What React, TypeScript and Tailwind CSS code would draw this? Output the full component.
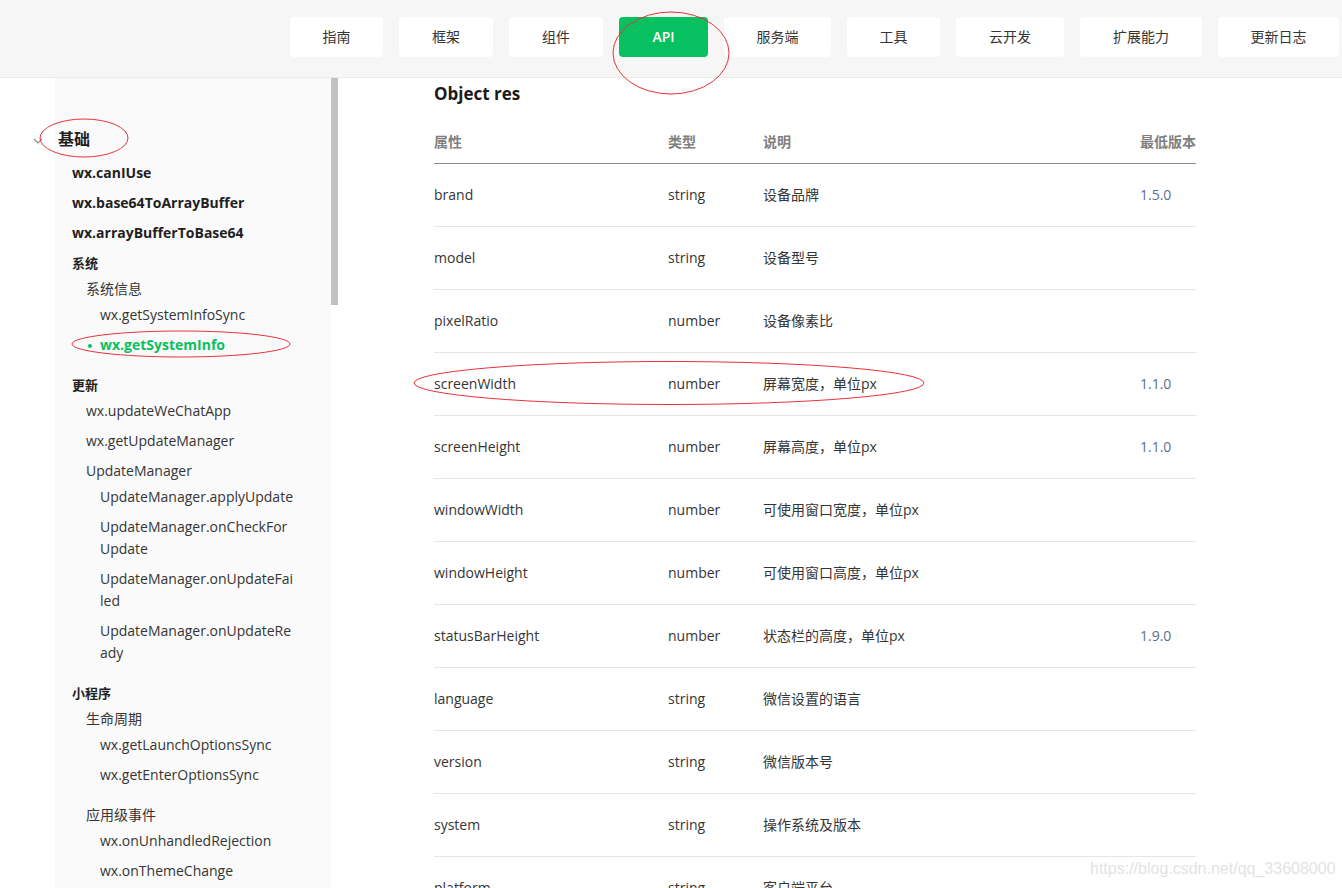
import React from "react";

const navItems = [
  { label: "指南", w: "w-[93px]" },
  { label: "框架", w: "w-[94px]" },
  { label: "组件", w: "w-[94px]" },
  { label: "API", w: "w-[89px]", active: true },
  { label: "服务端", w: "w-[107px]" },
  { label: "工具", w: "w-[93px]" },
  { label: "云开发", w: "w-[108px]" },
  { label: "扩展能力", w: "w-[122px]" },
  { label: "更新日志", w: "w-[121px]" },
];

type SideItem = {
  text: string[];
  kind: "bold" | "group" | "sub" | "item" | "active";
  indent: number;
  gapAfter?: boolean;
};

const sideItems: SideItem[] = [
  { text: ["wx.canIUse"], kind: "bold", indent: 17 },
  { text: ["wx.base64ToArrayBuffer"], kind: "bold", indent: 17 },
  { text: ["wx.arrayBufferToBase64"], kind: "bold", indent: 17 },
  { text: ["系统"], kind: "group", indent: 17 },
  { text: ["系统信息"], kind: "sub", indent: 31 },
  { text: ["wx.getSystemInfoSync"], kind: "item", indent: 45 },
  { text: ["wx.getSystemInfo"], kind: "active", indent: 45, gapAfter: true },
  { text: ["更新"], kind: "group", indent: 17 },
  { text: ["wx.updateWeChatApp"], kind: "item", indent: 31 },
  { text: ["wx.getUpdateManager"], kind: "item", indent: 31 },
  { text: ["UpdateManager"], kind: "sub", indent: 31 },
  { text: ["UpdateManager.applyUpdate"], kind: "item", indent: 45 },
  { text: ["UpdateManager.onCheckFor", "Update"], kind: "item", indent: 45 },
  { text: ["UpdateManager.onUpdateFai", "led"], kind: "item", indent: 45 },
  { text: ["UpdateManager.onUpdateRe", "ady"], kind: "item", indent: 45, gapAfter: true },
  { text: ["小程序"], kind: "group", indent: 17 },
  { text: ["生命周期"], kind: "sub", indent: 31 },
  { text: ["wx.getLaunchOptionsSync"], kind: "item", indent: 45 },
  { text: ["wx.getEnterOptionsSync"], kind: "item", indent: 45, gapAfter: true },
  { text: ["应用级事件"], kind: "sub", indent: 31 },
  { text: ["wx.onUnhandledRejection"], kind: "item", indent: 45 },
  { text: ["wx.onThemeChange"], kind: "item", indent: 45 },
];

const rows = [
  ["brand", "string", "设备品牌", "1.5.0"],
  ["model", "string", "设备型号", ""],
  ["pixelRatio", "number", "设备像素比", ""],
  ["screenWidth", "number", "屏幕宽度，单位px", "1.1.0"],
  ["screenHeight", "number", "屏幕高度，单位px", "1.1.0"],
  ["windowWidth", "number", "可使用窗口宽度，单位px", ""],
  ["windowHeight", "number", "可使用窗口高度，单位px", ""],
  ["statusBarHeight", "number", "状态栏的高度，单位px", "1.9.0"],
  ["language", "string", "微信设置的语言", ""],
  ["version", "string", "微信版本号", ""],
  ["system", "string", "操作系统及版本", ""],
  ["platform", "string", "客户端平台", ""],
];

function SideRow({ item }: { item: SideItem }) {
  const isHeading = item.kind === "group" || item.kind === "sub";
  let textCls = "text-[14px] text-[#353535]";
  if (item.kind === "bold") textCls = "text-[14px] font-bold text-[#1f1f1f]";
  if (item.kind === "group") textCls = "text-[13px] font-semibold text-[#1f1f1f]";
  if (item.kind === "sub") textCls = "text-[14px] text-[#353535]";
  if (item.kind === "active") textCls = "text-[14px] font-bold text-[#07c160]";

  return (
    <div
      className={`relative leading-[22px] ${isHeading ? "pt-1" : "py-1"} ${
        item.gapAfter ? "mb-[10px]" : ""
      } ${textCls}`}
      style={{ paddingLeft: item.indent }}
    >
      {item.kind === "active" && (
        <span className="absolute left-[33px] top-[14px] h-[4px] w-[4px] rounded-full bg-[#07c160]" />
      )}
      {item.text.map((t) => (
        <div key={t}>{t}</div>
      ))}
    </div>
  );
}

export default function App() {
  return (
    <div className="relative h-[888px] w-[1342px] overflow-hidden bg-white font-['Open_Sans','Noto_Sans_CJK_SC',sans-serif] text-[#353535]">
      {/* top nav */}
      <header className="flex h-[78px] gap-4 border-b border-[#ebebeb] bg-[#f6f6f6] pl-[290px] pt-[17px]">
        {navItems.map((n) => (
          <div
            key={n.label}
            className={`flex h-10 shrink-0 items-center justify-center rounded-[4px] pb-[1px] text-[14px] ${n.w} ${
              n.active ? "bg-[#07c160] font-semibold text-white" : "bg-white text-[#353535]"
            }`}
          >
            {n.label}
          </div>
        ))}
      </header>

      <div className="flex">
        {/* sidebar */}
        <aside className="flex w-[331px] shrink-0">
          <div className="w-[55px] shrink-0" />
          <div className="flex h-[810px] flex-1 flex-col bg-[#fafafa] pt-[50px]">
            <div className="-ml-[22px] flex h-[30px] items-center gap-[15px] text-[16px] font-semibold leading-[24px] text-[#1f1f1f]">
              <svg width="10" height="6" viewBox="0 0 10 6" className="mb-[4px]">
                <path d="M1 1 L5 5 L9 1" fill="none" stroke="#8a8a8a" strokeWidth="1.2" />
              </svg>
              <span className="mb-[8px]">基础</span>
            </div>
            {sideItems.map((it) => (
              <SideRow key={it.text.join("")} item={it} />
            ))}
          </div>
        </aside>
        <div className="w-[7px] shrink-0">
          <div className="h-[227px] bg-[#c1c1c1]" />
        </div>

        {/* main */}
        <main className="flex-1 pl-[96px] pt-[4px]">
          <h2 className="text-[17px] font-bold leading-[24px] text-[#1a1a1a]">Object res</h2>
          <div className="mt-[16px] w-[762px] text-[14px]">
            <div className="grid h-[42px] grid-cols-[234px_95px_377px_56px] items-center border-b border-[#8c8c8c] pb-[2px] font-semibold text-[#808080]">
              <div>属性</div>
              <div>类型</div>
              <div>说明</div>
              <div className="whitespace-nowrap">最低版本</div>
            </div>
            {rows.map((r) => (
              <div
                key={r[0]}
                className="grid h-[63px] grid-cols-[234px_95px_377px_56px] items-center border-b border-[#e5e5e5] pb-[2px] text-[#353535]"
              >
                <div>{r[0]}</div>
                <div>{r[1]}</div>
                <div>{r[2]}</div>
                <div className="text-[#5d6d8f]">{r[3]}</div>
              </div>
            ))}
          </div>
        </main>
      </div>

      {/* red annotation marks */}
      <svg className="pointer-events-none absolute left-0 top-0" width="1342" height="888">
        <g fill="none" stroke="#e8333a" strokeWidth="1">
          <ellipse cx="671" cy="53" rx="58" ry="41" />
          <ellipse cx="84" cy="138" rx="44" ry="19" />
          <ellipse cx="181" cy="344" rx="109" ry="13" />
          <ellipse cx="669" cy="383" rx="255" ry="21.5" />
        </g>
      </svg>

      {/* watermark */}
      <div className="pointer-events-none absolute left-[1090px] top-[859px] font-['Liberation_Sans',sans-serif] text-[16px] leading-[20px] text-[#e3e3e3]">
        https://blog.csdn.net/qq_33608000
      </div>
    </div>
  );
}
